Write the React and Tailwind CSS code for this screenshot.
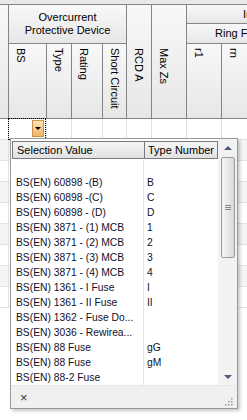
import React from "react";

const cols = [
  { w: "w-[9px]" },
  { w: "w-[38px]", label: "BS" },
  { w: "w-[25px]", label: "Type" },
  { w: "w-[31px]", label: "Rating" },
  { w: "w-[24px]", label: "Short Circuit" },
  { w: "w-[25px]", label: "RCD A" },
  { w: "w-[35px]", label: "Max Zs" },
  { w: "w-[35px]", label: "r1" },
  { w: "w-[40px]", label: "rn" },
];

const options = [
  ["", ""],
  ["BS(EN) 60898 -(B)", "B"],
  ["BS(EN) 60898 -(C)", "C"],
  ["BS(EN) 60898 - (D)", "D"],
  ["BS(EN) 3871 - (1) MCB", "1"],
  ["BS(EN) 3871 - (2) MCB", "2"],
  ["BS(EN) 3871 - (3) MCB", "3"],
  ["BS(EN) 3871 - (4) MCB", "4"],
  ["BS(EN) 1361 - I Fuse", "I"],
  ["BS(EN) 1361 - II Fuse", "II"],
  ["BS(EN) 1362 - Fuse Do...", ""],
  ["BS(EN) 3036 - Rewirea...", ""],
  ["BS(EN) 88 Fuse", "gG"],
  ["BS(EN) 88 Fuse", "gM"],
  ["BS(EN) 88-2 Fuse", ""],
];

const headBg = "bg-gradient-to-b from-[#f8f8f8] to-[#e7e7e7]";

function VHead({ label, w, tall }) {
  return (
    <div className={`${w} h-full shrink-0 border-r border-[#858585] ${headBg} pl-[5px] ${tall ? "pt-[43px]" : "pt-[4px]"}`}>
      <span className="block leading-[13px] [writing-mode:vertical-rl] whitespace-nowrap">{label}</span>
    </div>
  );
}

function DataRow({ index }) {
  const shade = index % 2 === 1 ? "bg-[#f4f4f4]" : "bg-white";
  return (
    <div className={`flex h-[21px] border-b border-[#e2e2e2] ${shade}`}>
      {cols.map((c, i) => (
        <div key={i} className={`${c.w} shrink-0 h-full border-r border-[#e2e2e2] relative`}>
          {index === 0 && i === 1 && (
            <div className="absolute inset-[-1px_0_-1px_-1px] border border-dotted border-black">
              <div className="absolute right-[1px] top-[1px] w-[12px] h-[17px] border border-[#c9924a] bg-gradient-to-b from-[#fde3b4] to-[#f3b462] flex items-center justify-center">
                <div className="w-0 h-0 border-l-[3px] border-r-[3px] border-t-[3px] border-l-transparent border-r-transparent border-t-black" />
              </div>
            </div>
          )}
        </div>
      ))}
    </div>
  );
}

export default function App() {
  return (
    <div className="relative w-[247px] h-[420px] overflow-hidden bg-white text-[11px] text-black font-['Liberation_Sans',Arial,sans-serif]">
      {/* header */}
      <div className="h-[5px] bg-[#e9e9e9] border-b border-[#858585]" />
      <div className="flex h-[114px] border-b border-[#858585] w-[400px]">
        <div className={`w-[9px] h-full shrink-0 border-r border-[#858585] ${headBg}`} />
        <div className="w-[118px] shrink-0 flex flex-col">
          <div className={`h-[39px] border-b border-r border-[#858585] ${headBg} flex flex-col items-center justify-center leading-[13px]`}>
            <span>Overcurrent</span>
            <span>Protective Device</span>
          </div>
          <div className="flex flex-1">
            {cols.slice(1, 5).map((c) => (
              <VHead key={c.label} {...c} />
            ))}
          </div>
        </div>
        <VHead {...cols[5]} tall />
        <VHead {...cols[6]} tall />
        <div className="w-[200px] shrink-0 flex flex-col">
          <div className={`h-[19px] border-b border-[#858585] ${headBg} pl-[56px] flex items-center whitespace-nowrap`}>
            Installation Test Results
          </div>
          <div className={`h-[20px] border-b border-[#858585] ${headBg} pl-[28px] flex items-center whitespace-nowrap`}>
            Ring Final Circuit
          </div>
          <div className="flex flex-1">
            <VHead {...cols[7]} />
            <VHead {...cols[8]} />
          </div>
        </div>
      </div>

      {/* rows */}
      <div>
        {Array.from({ length: 9 }).map((_, i) => (
          <DataRow key={i} index={i} />
        ))}
      </div>

      {/* dropdown popup */}
      <div className="absolute left-[10px] top-[138px] w-[228px] h-[271px] border border-[#9a9a9a] bg-white shadow-[2px_2px_3px_rgba(0,0,0,0.22)] flex flex-col text-[10.3px]">
        <div className="flex flex-1 min-h-0">
          <div className="w-[207px] flex flex-col">
            <div className="flex mt-[2px] ml-[1px] h-[18px] text-[11px]">
              <div className="w-[133px] h-full border border-[#7a7a7a] bg-gradient-to-b from-[#f6f6f6] to-[#e1e1e1] pl-[4px] flex items-center">
                Selection Value
              </div>
              <div className="w-[73px] h-full border border-l-0 border-[#7a7a7a] bg-gradient-to-b from-[#f6f6f6] to-[#e1e1e1] pl-[3px] flex items-center">
                Type Number
              </div>
            </div>
            <div className="flex-1 flex flex-col pt-[1px]">
              {options.map(([v, t], i) => (
                <div key={i} className="flex h-[15px] items-center text-[#10102a]">
                  <div className="w-[133px] pl-[5px] whitespace-nowrap overflow-hidden border-r border-[#e4e4e4] h-full flex items-center">
                    {v}
                  </div>
                  <div className="pl-[3px]">{t}</div>
                </div>
              ))}
              <div className="flex flex-1">
                <div className="w-[133px] border-r border-[#e4e4e4]" />
              </div>
            </div>
          </div>
          {/* scrollbar */}
          <div className="w-[19px] bg-[#f2f2f2] flex flex-col items-center">
            <div className="h-[18px] flex items-center justify-center">
              <div className="w-0 h-0 border-l-[4px] border-r-[4px] border-b-[4px] border-l-transparent border-r-transparent border-b-[#4b5a78]" />
            </div>
            <div className="w-[14px] h-[101px] rounded-[2px] border border-[#9c9c9c] bg-gradient-to-r from-[#f6f6f6] to-[#d9d9d9] flex flex-col items-center justify-center gap-[1px]">
              <div className="w-[6px] h-px bg-[#8a8a8a]" />
              <div className="w-[6px] h-px bg-[#8a8a8a]" />
              <div className="w-[6px] h-px bg-[#8a8a8a]" />
            </div>
            <div className="flex-1" />
            <div className="h-[16px] flex items-center justify-center">
              <div className="w-0 h-0 border-l-[4px] border-r-[4px] border-t-[4px] border-l-transparent border-r-transparent border-t-[#4b5a78]" />
            </div>
          </div>
        </div>
        {/* footer */}
        <div className="h-[23px] bg-[#f0f0f0] border-t border-[#e6e6e6] flex items-center justify-between pl-[9px] pr-[4px]">
          <span className="text-[13px] leading-none text-[#333]">×</span>
          <svg width="9" height="9" viewBox="0 0 9 9" className="mt-[8px]">
            {[[7, 1], [4, 4], [7, 4], [1, 7], [4, 7], [7, 7]].map(([x, y], i) => (
              <rect key={i} x={x} y={y} width="1.5" height="1.5" fill="#9a9a9a" />
            ))}
          </svg>
        </div>
      </div>
    </div>
  );
}
